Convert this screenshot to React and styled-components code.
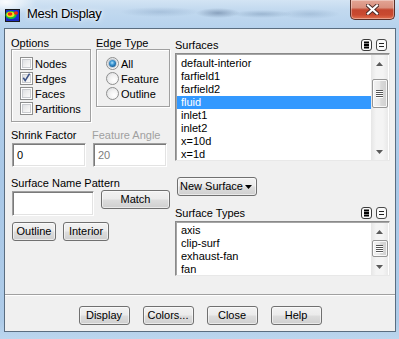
import React from 'react';
import styled, { createGlobalStyle } from 'styled-components';

const GlobalStyle = createGlobalStyle`
  html, body { margin: 0; padding: 0; background: #ffffff; }
  body { font-family: "Liberation Sans", Arial, sans-serif; }
  * { box-sizing: border-box; }
`;

const Window = styled.div`
  width: 399px;
  height: 339px;
  display: flex;
  flex-direction: column;
  overflow: hidden;
  background:
    radial-gradient(ellipse 30px 14px at 6px 2px, rgba(255,255,255,0.9), rgba(255,255,255,0) 100%),
    radial-gradient(ellipse 40px 5px at 160px 12px, rgba(120,150,185,0.35), rgba(120,150,185,0) 100%),
    radial-gradient(ellipse 22px 5px at 218px 13px, rgba(70,95,130,0.45), rgba(70,95,130,0) 100%),
    radial-gradient(ellipse 30px 4px at 262px 14px, rgba(90,120,155,0.35), rgba(90,120,155,0) 100%),
    radial-gradient(ellipse 30px 5px at 310px 14px, rgba(110,140,175,0.3), rgba(110,140,175,0) 100%),
    linear-gradient(180deg, #d3e4f4 0px, #c2d9ef 10px, #b6d2ed 28px, #a9c8e7 180px, #aecbe8 320px, #bcd6ee 339px);
`;

const TitleBar = styled.div`
  height: 28px;
  flex: none;
  display: flex;
  align-items: flex-start;
`;

const AppIcon = styled.svg`
  flex: none;
  margin: 9px 0 0 5px;
`;

const TitleText = styled.div`
  flex: 1;
  margin: 6px 0 0 7px;
  font-family: "Liberation Sans", Arial, sans-serif;
  font-size: 13px;
  letter-spacing: -0.3px;
  line-height: 16px;
  color: #000;
  text-shadow: 0 0 6px rgba(255,255,255,0.95), 0 0 3px rgba(255,255,255,0.9);
`;

const CloseButton = styled.div`
  flex: none;
  width: 45px;
  height: 20px;
  margin-right: 4px;
  border: 1px solid #5a3028;
  border-top: none;
  border-radius: 0 0 5px 5px;
  background: linear-gradient(180deg, #e3a595 0%, #d9907e 40%, #c4462e 52%, #c94a30 78%, #e0704f 100%);
  box-shadow: inset 0 0 0 1px rgba(255,255,255,0.35);
  display: flex;
  align-items: center;
  justify-content: center;
`;

const Client = styled.div`
  flex: 1;
  min-height: 0;
  margin: 0 3px 7px 4px;
  background: #f0f0f0;
  border: 1px solid #5a6d80;
  display: flex;
  flex-direction: column;
  font-size: 11px;
  color: #000;
`;

const Main = styled.div`
  flex: 1;
  display: grid;
  grid-template-columns: 159px 215px;
  column-gap: 5px;
  align-items: start;
  padding: 8px 0 0 6px;
`;

const LeftColumn = styled.div`
  display: flex;
  flex-direction: column;
`;

const RightColumn = styled.div`
  display: flex;
  flex-direction: column;
`;

const GroupsRow = styled.div`
  display: flex;
  align-items: flex-start;
  gap: 5px;
`;

const Group = styled.div`
  display: flex;
  flex-direction: column;
  width: ${p => p.$w}px;
`;

const Label = styled.div`
  height: 12px;
  line-height: 12px;
  white-space: nowrap;
  color: ${p => (p.$disabled ? '#a0a0a0' : '#000')};
`;

const GroupBox = styled.div`
  border: 1px solid #a0a0a0;
  box-shadow: inset 1px 1px 0 #ffffff, 1px 1px 0 #ffffff;
  padding: 6px 0 5px ${p => p.$pl}px;
  display: flex;
  flex-direction: column;
`;

const OptionRow = styled.div`
  height: 15px;
  display: flex;
  align-items: center;
  gap: 2px;
  white-space: nowrap;
`;

const CheckBox = styled.span`
  width: 13px;
  height: 13px;
  flex: none;
  border: 1px solid #8e8f8f;
  background: #fff;
  padding: 1px;
  display: flex;
`;

const CheckInner = styled.span`
  flex: 1;
  border: 1px solid #c9cbcf;
  background: linear-gradient(135deg, #dfe1e4 0%, #eeeeee 50%, #fbfbfb 100%);
  display: flex;
  align-items: center;
  justify-content: center;
  position: relative;
  overflow: visible;
`;

const CheckMark = styled.svg`
  position: absolute;
  left: -2px;
  top: -3px;
`;

const Radio = styled.span`
  width: 13px;
  height: 13px;
  flex: none;
  border-radius: 50%;
  border: 1px solid #8e8f8f;
  background: radial-gradient(circle at 65% 65%, #ffffff 0%, #f2f2f2 45%, #d6d8db 100%);
  display: flex;
  align-items: center;
  justify-content: center;
`;

const RadioDot = styled.span`
  width: 7px;
  height: 7px;
  border-radius: 50%;
  background: radial-gradient(circle at 45% 40%, #b6e3fb 0%, #3f9ad6 35%, #135a94 75%, #0c416f 100%);
  box-shadow: 0 0 0 1px rgba(40, 80, 120, 0.25);
`;

const FieldGrid = styled.div`
  display: grid;
  grid-template-columns: 81px 78px;
  row-gap: 2px;
  margin-top: 7px;
`;

const TextField = styled.div`
  width: ${p => p.$w}px;
  height: ${p => p.$h}px;
  margin-left: 1px;
  background: #fff;
  border: 1px solid;
  border-color: #a0a0a0 #ffffff #ffffff #a0a0a0;
  box-shadow: inset 1px 1px 0 #7a7a7a, inset -1px -1px 0 #e3e3e3;
  padding-left: 4px;
  display: flex;
  align-items: center;
  color: ${p => (p.$disabled ? '#7d7d7d' : '#000')};
`;

const PatternLabel = styled(Label)`
  margin-top: 10px;
`;

const PatternRow = styled.div`
  display: flex;
  align-items: flex-start;
  gap: 7px;
  margin-top: 2px;
`;

const Button = styled.button`
  width: ${p => p.$w}px;
  height: 19px;
  flex: none;
  margin: ${p => p.$m || '0'};
  padding: 0;
  border: 1px solid #707070;
  border-radius: 3px;
  background: linear-gradient(180deg, #f2f2f2 0%, #ebebeb 48%, #dddddd 52%, #cfcfcf 100%);
  box-shadow: inset 0 0 0 1px rgba(255,255,255,0.55);
  font-family: "Liberation Sans", Arial, sans-serif;
  font-size: 11px;
  color: #000;
  line-height: 17px;
  text-align: center;
`;

const ButtonRow = styled.div`
  display: flex;
  gap: 7px;
  margin: 6px 0 0 1px;
`;

const Header = styled.div`
  height: 16px;
  margin-top: ${p => p.$mt || 0}px;
  display: flex;
  align-items: center;
  gap: 4px;
`;

const HeaderLabel = styled.div`
  flex: 1;
  line-height: 12px;
`;

const HeaderIcon = styled.svg`
  flex: none;
  margin-right: ${p => p.$mr || 0}px;
`;

const ListBox = styled.div`
  height: ${p => p.$h}px;
  display: flex;
  background: #fff;
  border: 1px solid;
  border-color: #8a8a8a #e8e8e8 #e8e8e8 #8a8a8a;
  box-shadow: inset 1px 1px 0 #a5a5a5;
  padding: 1px 1px 0 1px;
  overflow: hidden;
`;

const Items = styled.div`
  flex: 1;
  padding-top: ${p => p.$pt}px;
  overflow: hidden;
`;

const Item = styled.div`
  height: 13px;
  line-height: 13px;
  padding-left: 4px;
  white-space: nowrap;
  background: ${p => (p.$selected ? '#3399ff' : 'transparent')};
  color: ${p => (p.$selected ? '#ffffff' : '#000000')};
`;

const ScrollBar = styled.div`
  width: 17px;
  flex: none;
  display: flex;
  flex-direction: column;
  background: linear-gradient(90deg, #e6e6e6 0%, #f4f4f4 30%, #f4f4f4 70%, #e9e9e9 100%);
`;

const ArrowZone = styled.div`
  height: 17px;
  flex: none;
  display: flex;
  align-items: center;
  justify-content: center;
`;

const Track = styled.div`
  flex: 1;
  padding-top: ${p => p.$top}px;
  display: flex;
  flex-direction: column;
  align-items: center;
`;

const Thumb = styled.div`
  width: 16px;
  height: ${p => p.$h}px;
  border: 1px solid #969696;
  border-radius: 2px;
  background: linear-gradient(90deg, #f3f3f3 0%, #e8e8e8 50%, #d9d9d9 55%, #d0d0d0 100%);
  box-shadow: inset 0 0 0 1px rgba(255,255,255,0.8);
  display: flex;
  flex-direction: column;
  align-items: center;
  justify-content: center;
  gap: 1px;
`;

const Grip = styled.span`
  width: 7px;
  height: 1px;
  background: #555;
  box-shadow: 0 1px 0 #fff;
`;

const DropButton = styled(Button)`
  display: flex;
  align-items: center;
  justify-content: space-between;
  padding: 0 4px 0 2px;
  margin: 16px 0 0 2px;
  text-align: left;
`;

const Separator = styled.div`
  height: 2px;
  flex: none;
  border-top: 1px solid #a0a0a0;
  background: #ffffff;
`;

const Footer = styled.div`
  height: 35px;
  flex: none;
  display: flex;
  justify-content: center;
  gap: 13px;
  padding-top: 10px;
`;

const SelectAllIcon = ({ mr }) => (
  <HeaderIcon width="11" height="12" viewBox="0 0 11 12" $mr={mr}>
    <rect x="0.5" y="0.5" width="10" height="11" rx="2.5" fill="#fafafa" stroke="#3a3a3a" />
    <rect x="3" y="2.5" width="5" height="2" fill="#000" />
    <rect x="3" y="5" width="5" height="2" fill="#000" />
    <rect x="3" y="7.5" width="5" height="2" fill="#000" />
  </HeaderIcon>
);

const DeselectIcon = ({ mr }) => (
  <HeaderIcon width="11" height="12" viewBox="0 0 11 12" $mr={mr}>
    <rect x="0.5" y="0.5" width="10" height="11" rx="2.5" fill="#fafafa" stroke="#4a4a4a" />
    <rect x="3" y="4" width="5" height="1" fill="#222" />
    <rect x="3" y="7" width="5" height="1" fill="#222" />
  </HeaderIcon>
);

const UpArrow = () => (
  <svg width="7" height="4" viewBox="0 0 7 4">
    <path d="M0 4 L3.5 0 L7 4 Z" fill="#5a5a5a" />
  </svg>
);

const DownArrow = () => (
  <svg width="7" height="4" viewBox="0 0 7 4">
    <path d="M0 0 L7 0 L3.5 4 Z" fill="#5a5a5a" />
  </svg>
);

const Check = ({ checked, children }) => (
  <OptionRow>
    <CheckBox>
      <CheckInner>
        {checked && (
          <CheckMark width="11" height="11" viewBox="0 0 11 11">
            <path d="M2.3 5.8 L4.2 8.6 L8.6 1.6" fill="none" stroke="#3b5286" strokeWidth="1.6" />
          </CheckMark>
        )}
      </CheckInner>
    </CheckBox>
    <span>{children}</span>
  </OptionRow>
);

const RadioOption = ({ selected, children }) => (
  <OptionRow>
    <Radio>{selected && <RadioDot />}</Radio>
    <span>{children}</span>
  </OptionRow>
);

const List = ({ items, selected, height, pt, thumbTop, thumbH }) => (
  <ListBox $h={height}>
    <Items $pt={pt}>
      {items.map(it => (
        <Item key={it} $selected={it === selected}>{it}</Item>
      ))}
    </Items>
    <ScrollBar>
      <ArrowZone><UpArrow /></ArrowZone>
      <Track $top={thumbTop}>
        <Thumb $h={thumbH}>
          <Grip /><Grip /><Grip /><Grip />
        </Thumb>
      </Track>
      <ArrowZone><DownArrow /></ArrowZone>
    </ScrollBar>
  </ListBox>
);

const surfaces = ['default-interior', 'farfield1', 'farfield2', 'fluid', 'inlet1', 'inlet2', 'x=10d', 'x=1d'];
const surfaceTypes = ['axis', 'clip-surf', 'exhaust-fan', 'fan'];

export default function App() {
  return (
    <>
      <GlobalStyle />
      <Window>
        <TitleBar>
          <AppIcon width="15" height="13" viewBox="0 0 15 13">
            <rect x="0" y="0" width="15" height="13" fill="#1a1a1a" />
            <rect x="1" y="1" width="13" height="11" fill="#1d2fd8" />
            <ellipse cx="6" cy="6" rx="5.5" ry="4" fill="#18c43a" />
            <ellipse cx="5.5" cy="5.5" rx="4" ry="2.8" fill="#f4e21a" />
            <ellipse cx="5" cy="5" rx="2.4" ry="1.7" fill="#ee2a14" />
            <ellipse cx="11" cy="4" rx="2" ry="1.8" fill="#ee2a14" />
            <rect x="1" y="10" width="13" height="2" fill="#1a2bc0" />
          </AppIcon>
          <TitleText>Mesh Display</TitleText>
          <CloseButton>
            <svg width="13" height="11" viewBox="0 0 13 11">
              <path d="M2 1.5 L11 9.5 M11 1.5 L2 9.5" stroke="#4a2a26" strokeWidth="4" strokeLinecap="square" />
              <path d="M2 1.5 L11 9.5 M11 1.5 L2 9.5" stroke="#ffffff" strokeWidth="2.2" strokeLinecap="square" />
            </svg>
          </CloseButton>
        </TitleBar>
        <Client>
          <Main>
            <LeftColumn>
              <GroupsRow>
                <Group $w={80}>
                  <Label>Options</Label>
                  <GroupBox $pl={8}>
                    <Check>Nodes</Check>
                    <Check checked>Edges</Check>
                    <Check>Faces</Check>
                    <Check>Partitions</Check>
                  </GroupBox>
                </Group>
                <Group $w={74}>
                  <Label>Edge Type</Label>
                  <GroupBox $pl={9}>
                    <RadioOption selected>All</RadioOption>
                    <RadioOption>Feature</RadioOption>
                    <RadioOption>Outline</RadioOption>
                  </GroupBox>
                </Group>
              </GroupsRow>
              <FieldGrid>
                <Label>Shrink Factor</Label>
                <Label $disabled>Feature Angle</Label>
                <TextField $w={74} $h={24}>0</TextField>
                <TextField $w={74} $h={24} $disabled>20</TextField>
              </FieldGrid>
              <PatternLabel>Surface Name Pattern</PatternLabel>
              <PatternRow>
                <TextField $w={82} $h={25} />
                <Button $w={69} $m="-1px 0 0 0">Match</Button>
              </PatternRow>
              <ButtonRow>
                <Button $w={44}>Outline</Button>
                <Button $w={46}>Interior</Button>
              </ButtonRow>
            </LeftColumn>
            <RightColumn>
              <Header>
                <HeaderLabel>Surfaces</HeaderLabel>
                <SelectAllIcon />
                <DeselectIcon mr={3} />
              </Header>
              <List items={surfaces} selected="fluid" height={108} pt={2} thumbTop={7} thumbH={29} />
              <DropButton $w={80}>
                <span>New Surface</span>
                <svg width="7" height="4" viewBox="0 0 7 4">
                  <path d="M0 0 L7 0 L3.5 4 Z" fill="#000" />
                </svg>
              </DropButton>
              <Header $mt={9}>
                <HeaderLabel>Surface Types</HeaderLabel>
                <SelectAllIcon />
                <DeselectIcon mr={3} />
              </Header>
              <List items={surfaceTypes} height={55} pt={1} thumbTop={0} thumbH={17} />
            </RightColumn>
          </Main>
          <Separator />
          <Footer>
            <Button $w={51}>Display</Button>
            <Button $w={51}>Colors...</Button>
            <Button $w={51}>Close</Button>
            <Button $w={51}>Help</Button>
          </Footer>
        </Client>
      </Window>
    </>
  );
}
